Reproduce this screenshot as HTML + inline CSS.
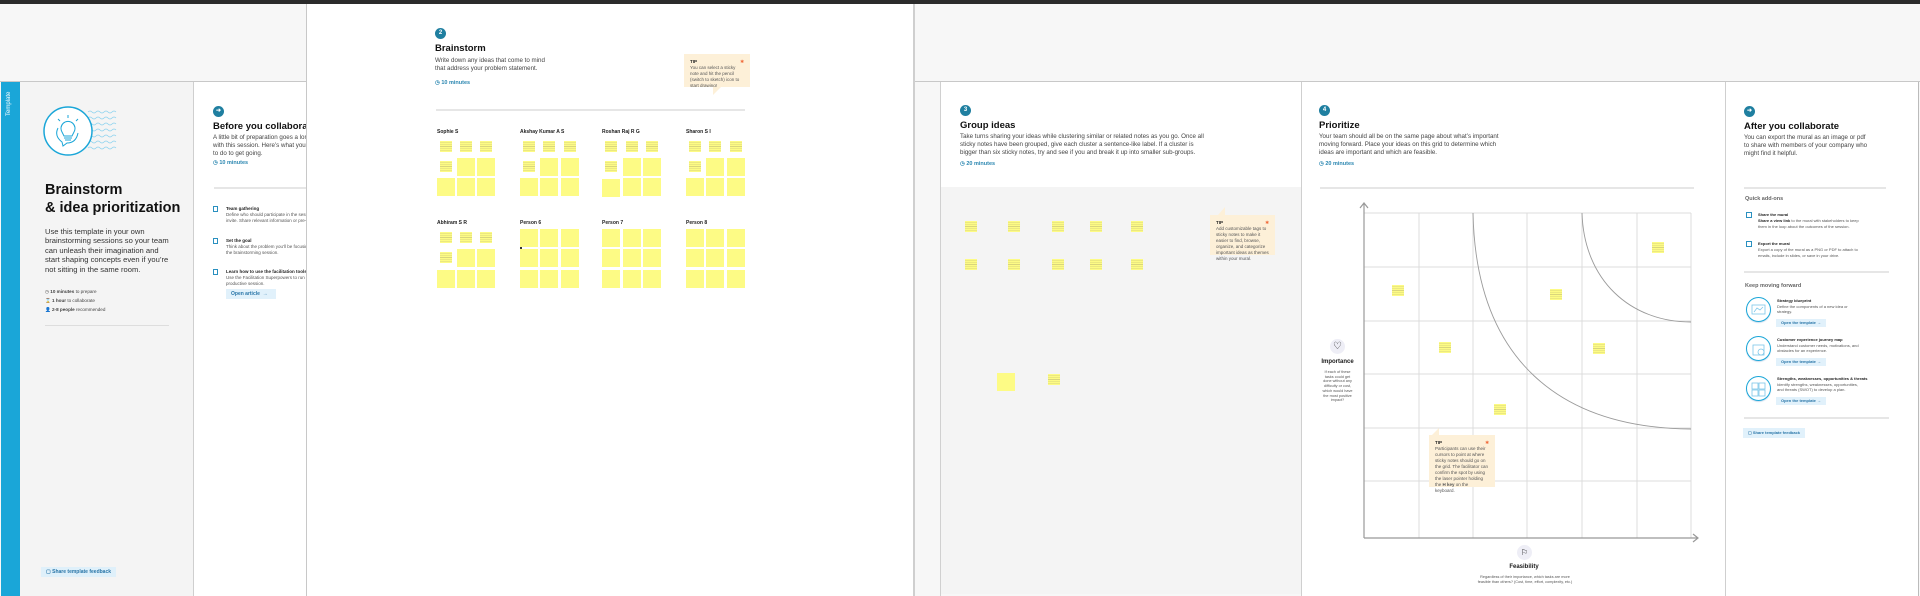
<!DOCTYPE html>
<html><head><meta charset="utf-8"><style>
*{margin:0;padding:0;box-sizing:border-box}
body{width:1920px;height:596px;background:#f7f7f7;position:relative;overflow:hidden;font-family:"Liberation Sans",sans-serif;color:#1a1a1a}
.a{position:absolute}
.s{position:absolute;background:#fdfb85;width:18px;height:18px}
.t{background:#fdfb85 repeating-linear-gradient(#fdfb85 0 1.6px,#d9d57c 1.6px 2.2px);background-clip:content-box;padding:3px 3px 4px}
.circ{position:absolute;width:11px;height:11px;border-radius:50%;background:#1f7fa0;color:#fff;font-size:6px;font-weight:bold;text-align:center;line-height:11px}
.h{position:absolute;font-weight:bold;font-size:9.5px;color:#111}
.p{position:absolute;font-size:6.2px;line-height:8px;color:#444}
.min{position:absolute;font-size:5.5px;color:#2a86b0;font-weight:bold}
.line{position:absolute;height:2px;background:#e6e6e6}
.nm{position:absolute;font-size:5px;font-weight:bold;color:#222}
.tip{position:absolute;background:#fdf0d8;font-size:4.5px;line-height:6px;color:#555;padding:5px 6px}
.btn{position:absolute;background:#e1f1fb;color:#2a76a8;font-size:5px;font-weight:bold;padding:0 5px;line-height:10px}
</style></head><body>
<div class="a" style="left:0;top:0;width:1920px;height:4px;background:#2b2b2b"></div>
<div class="a" style="left:0;top:81px;width:1920px;height:1px;background:#c8c8c8"></div>

<div class="a" style="left:1px;top:82px;width:19px;height:514px;background:#1aa6d8"></div>
<div class="a" style="color:#fff;font-size:6px;transform:rotate(-90deg);transform-origin:left top;top:116px;left:6px">Template</div>
<div class="a" style="left:20px;top:82px;width:174px;height:514px;background:#f4f4f4;border-right:1px solid #cfcfcf"></div>
<svg class="a" style="left:40px;top:104px" width="80" height="56" viewBox="0 0 80 56">
<g fill="none" stroke="#8dd3ef" stroke-width="0.8">
<path d="M48 8 q2-2 4 0 t4 0 t4 0 t4 0 t4 0 t4 0 t4 0"/><path d="M48 14 q2-2 4 0 t4 0 t4 0 t4 0 t4 0 t4 0 t4 0"/><path d="M48 20 q2-2 4 0 t4 0 t4 0 t4 0 t4 0 t4 0 t4 0"/><path d="M48 26 q2-2 4 0 t4 0 t4 0 t4 0 t4 0 t4 0 t4 0"/><path d="M48 32 q2-2 4 0 t4 0 t4 0 t4 0 t4 0 t4 0 t4 0"/><path d="M48 38 q2-2 4 0 t4 0 t4 0 t4 0 t4 0 t4 0 t4 0"/><path d="M48 44 q2-2 4 0 t4 0 t4 0 t4 0 t4 0 t4 0 t4 0"/></g>
<circle cx="28" cy="27" r="24" fill="#fff" stroke="#1aa6d8" stroke-width="1.5"/>
<g fill="none" stroke="#1aa6d8" stroke-width="1"><path d="M22 28 a7 7 0 1 1 12 0 l-2 4 h-8 z"/><path d="M24 34 h8 M25 36 h6"/><path d="M18 24 q-4 8 4 14 l1 4 l4-3 q9 0 11-10"/><path d="M28 14 v-3 M20 17 l-2-2 M36 17 l2-2"/></g></svg>
<div class="a" style="left:45px;top:181px;font-size:14.5px;font-weight:bold;line-height:18px;color:#111">Brainstorm<br>&amp; idea prioritization</div>
<div class="a" style="left:45px;top:227px;font-size:7.6px;line-height:9.4px;color:#333;width:125px">Use this template in your own brainstorming sessions so your team can unleash their imagination and start shaping concepts even if you’re not sitting in the same room.</div>
<div class="a" style="left:45px;top:287px;font-size:4.6px;line-height:9px;color:#444">◷ <b>10 minutes</b> to prepare<br>⌛ <b>1 hour</b> to collaborate<br>👤 <b>2-8 people</b> recommended</div>
<div class="a" style="left:45px;top:325px;width:124px;height:1px;background:#ddd"></div>
<div class="btn" style="left:41px;top:567px;height:10px;background:#dff0fa">▢ Share template feedback</div>

<div class="a" style="left:194px;top:82px;width:113px;height:514px;background:#fff"></div>
<div class="circ" style="left:213px;top:106px">➜</div>
<div class="h" style="left:213px;top:121px">Before you collaborate</div>
<div class="p" style="left:213px;top:134px;white-space:nowrap">A little bit of preparation goes a long way<br>with this session. Here’s what you need<br>to do to get going.</div>
<div class="min" style="left:213px;top:160px">◷ 10 minutes</div>
<div class="line" style="left:214px;top:187px;width:93px"></div>
<div class="a" style="left:213px;top:206px;width:5px;height:6px;border:1px solid #2a90c0"></div>
<div class="a" style="left:226px;top:206px;font-size:4.5px;line-height:6px;color:#555;white-space:nowrap"><b style="color:#222">Team gathering</b><br>Define who should participate in the session and<br>invite. Share relevant information or pre-work.</div>
<div class="a" style="left:213px;top:238px;width:5px;height:6px;border:1px solid #2a90c0"></div>
<div class="a" style="left:226px;top:238px;font-size:4.5px;line-height:6px;color:#555;white-space:nowrap"><b style="color:#222">Set the goal</b><br>Think about the problem you’ll be focusing on in<br>the brainstorming session.</div>
<div class="a" style="left:213px;top:269px;width:5px;height:6px;border:1px solid #2a90c0"></div>
<div class="a" style="left:226px;top:269px;font-size:4.5px;line-height:6px;color:#555;white-space:nowrap"><b style="color:#222">Learn how to use the facilitation tools</b><br>Use the Facilitation Superpowers to run a<br>productive session.</div>
<div class="btn" style="left:226px;top:289px;width:50px;height:10px">Open article &nbsp;→</div>

<div class="a" style="left:306px;top:4px;width:609px;height:592px;background:#fff;border-left:1px solid #c8c8c8;border-right:2px solid #cfcfcf"></div>
<div class="circ" style="left:435px;top:28px">2</div>
<div class="h" style="left:435px;top:43px">Brainstorm</div>
<div class="p" style="left:435px;top:57px">Write down any ideas that come to mind<br>that address your problem statement.</div>
<div class="min" style="left:435px;top:80px">◷ 10 minutes</div>
<div class="tip" style="left:684px;top:54px;width:66px;height:33px"><b style="color:#222">TIP</b><span style="float:right;color:#f06a3a">✱</span><br>You can select a sticky note and hit the pencil (switch to sketch) icon to start drawing!</div>
<div class="a" style="left:713px;top:87px;width:0;height:0;border-left:8px solid #fdf0d8;border-bottom:8px solid transparent"></div>
<div class="line" style="left:436px;top:109px;width:309px"></div>
<div class="nm" style="left:437px;top:129px">Sophie S</div>
<div class="nm" style="left:520px;top:129px">Akshay Kumar A S</div>
<div class="nm" style="left:602px;top:129px">Roshan Raj R G</div>
<div class="nm" style="left:686px;top:129px">Sharon S I</div>
<div class="nm" style="left:437px;top:220px">Abhiram S R</div>
<div class="nm" style="left:520px;top:220px">Person 6</div>
<div class="nm" style="left:602px;top:220px">Person 7</div>
<div class="nm" style="left:686px;top:220px">Person 8</div>
<div class="s t" style="left:437px;top:138px"></div><div class="s t" style="left:457px;top:138px"></div><div class="s t" style="left:477px;top:138px"></div>
<div class="s t" style="left:437px;top:158px"></div><div class="s" style="left:457px;top:158px"></div><div class="s" style="left:477px;top:158px"></div>
<div class="s" style="left:437px;top:178px"></div><div class="s" style="left:457px;top:178px"></div><div class="s" style="left:477px;top:178px"></div>
<div class="s t" style="left:520px;top:138px"></div><div class="s t" style="left:540px;top:138px"></div><div class="s t" style="left:561px;top:138px"></div>
<div class="s t" style="left:520px;top:158px"></div><div class="s" style="left:540px;top:158px"></div><div class="s" style="left:561px;top:158px"></div>
<div class="s" style="left:520px;top:178px"></div><div class="s" style="left:540px;top:178px"></div><div class="s" style="left:561px;top:178px"></div>
<div class="s t" style="left:602px;top:138px"></div><div class="s t" style="left:623px;top:138px"></div><div class="s t" style="left:643px;top:138px"></div>
<div class="s t" style="left:602px;top:158px"></div><div class="s" style="left:623px;top:158px"></div><div class="s" style="left:643px;top:158px"></div>
<div class="s" style="left:602px;top:179px"></div><div class="s" style="left:623px;top:178px"></div><div class="s" style="left:643px;top:178px"></div>
<div class="s t" style="left:686px;top:138px"></div><div class="s t" style="left:706px;top:138px"></div><div class="s t" style="left:727px;top:138px"></div>
<div class="s t" style="left:686px;top:158px"></div><div class="s" style="left:706px;top:158px"></div><div class="s" style="left:727px;top:158px"></div>
<div class="s" style="left:686px;top:178px"></div><div class="s" style="left:706px;top:178px"></div><div class="s" style="left:727px;top:178px"></div>
<div class="s t" style="left:437px;top:229px"></div><div class="s t" style="left:457px;top:229px"></div><div class="s t" style="left:477px;top:229px"></div>
<div class="s t" style="left:437px;top:249px"></div><div class="s" style="left:457px;top:249px"></div><div class="s" style="left:477px;top:249px"></div>
<div class="s" style="left:437px;top:270px"></div><div class="s" style="left:457px;top:270px"></div><div class="s" style="left:477px;top:270px"></div>
<div class="s" style="left:520px;top:229px"></div><div class="s" style="left:540px;top:229px"></div><div class="s" style="left:561px;top:229px"></div>
<div class="s" style="left:520px;top:249px"></div><div class="s" style="left:540px;top:249px"></div><div class="s" style="left:561px;top:249px"></div>
<div class="s" style="left:520px;top:270px"></div><div class="s" style="left:540px;top:270px"></div><div class="s" style="left:561px;top:270px"></div>
<div class="s" style="left:602px;top:229px"></div><div class="s" style="left:623px;top:229px"></div><div class="s" style="left:643px;top:229px"></div>
<div class="s" style="left:602px;top:249px"></div><div class="s" style="left:623px;top:249px"></div><div class="s" style="left:643px;top:249px"></div>
<div class="s" style="left:602px;top:270px"></div><div class="s" style="left:623px;top:270px"></div><div class="s" style="left:643px;top:270px"></div>
<div class="s" style="left:686px;top:229px"></div><div class="s" style="left:706px;top:229px"></div><div class="s" style="left:727px;top:229px"></div>
<div class="s" style="left:686px;top:249px"></div><div class="s" style="left:706px;top:249px"></div><div class="s" style="left:727px;top:249px"></div>
<div class="s" style="left:686px;top:270px"></div><div class="s" style="left:706px;top:270px"></div><div class="s" style="left:727px;top:270px"></div>
<div class="a" style="left:520px;top:247px;width:2px;height:2px;background:#333"></div>

<div class="a" style="left:940px;top:82px;width:1px;height:514px;background:#d0d0d0"></div>

<div class="a" style="left:941px;top:82px;width:360px;height:105px;background:#fff"></div>
<div class="a" style="left:941px;top:187px;width:360px;height:407px;background:#f4f4f4"></div>
<div class="circ" style="left:960px;top:105px">3</div>
<div class="h" style="left:960px;top:120px">Group ideas</div>
<div class="p" style="left:960px;top:133px;white-space:nowrap">Take turns sharing your ideas while clustering similar or related notes as you go. Once all<br>sticky notes have been grouped, give each cluster a sentence-like label. If a cluster is<br>bigger than six sticky notes, try and see if you and break it up into smaller sub-groups.</div>
<div class="min" style="left:960px;top:161px">◷ 20 minutes</div>
<div class="s t" style="left:962px;top:218px"></div><div class="s t" style="left:1005px;top:218px"></div><div class="s t" style="left:1049px;top:218px"></div><div class="s t" style="left:1087px;top:218px"></div><div class="s t" style="left:1128px;top:218px"></div>
<div class="s t" style="left:962px;top:256px"></div><div class="s t" style="left:1005px;top:256px"></div><div class="s t" style="left:1049px;top:256px"></div><div class="s t" style="left:1087px;top:256px"></div><div class="s t" style="left:1128px;top:256px"></div>
<div class="s" style="left:997px;top:373px"></div><div class="s t" style="left:1045px;top:371px"></div>
<div class="tip" style="left:1210px;top:215px;width:65px;height:40px"><b style="color:#222">TIP</b><span style="float:right;color:#f06a3a">✱</span><br>Add customizable tags to sticky notes to make it easier to find, browse, organize, and categorize important ideas as themes within your mural.</div>
<div class="a" style="left:1218px;top:207px;width:0;height:0;border-left:7px solid transparent;border-bottom:8px solid #fdf0d8"></div>

<div class="a" style="left:1301px;top:82px;width:425px;height:514px;background:#fff;border-left:1px solid #cfcfcf;border-right:1px solid #cfcfcf"></div>
<div class="circ" style="left:1319px;top:105px">4</div>
<div class="h" style="left:1319px;top:120px">Prioritize</div>
<div class="p" style="left:1319px;top:133px;white-space:nowrap">Your team should all be on the same page about what’s important<br>moving forward. Place your ideas on this grid to determine which<br>ideas are important and which are feasible.</div>
<div class="min" style="left:1319px;top:161px">◷ 20 minutes</div>
<div class="line" style="left:1320px;top:187px;width:374px"></div>
<svg class="a" style="left:1355px;top:198px" width="350" height="350" viewBox="1355 198 350 350">
<g stroke="#dcdcdc" stroke-width="1" fill="none">
<path d="M1364 213H1691M1364 267H1691M1364 321H1691M1364 374H1691M1364 428H1691M1364 481H1691"/>
<path d="M1419 213V538M1473 213V538M1527 213V538M1582 213V538M1637 213V538M1691 213V538"/></g>
<g stroke="#9a9a9a" stroke-width="0.9" fill="none">
<path d="M1473 213 C1476 360 1560 428 1691 429"/>
<path d="M1582 213 C1584 280 1630 322 1691 322"/></g>
<g stroke="#999" stroke-width="1.2" fill="none">
<path d="M1364 538V203M1360 208l4-5 4 5"/>
<path d="M1364 538H1698M1693 534l5 4-5 4"/></g></svg>
<div class="s t" style="left:1649px;top:239px"></div><div class="s t" style="left:1389px;top:282px"></div><div class="s t" style="left:1547px;top:286px"></div>
<div class="s t" style="left:1436px;top:339px"></div><div class="s t" style="left:1590px;top:340px"></div><div class="s t" style="left:1491px;top:401px"></div>
<div class="tip" style="left:1429px;top:435px;width:66px;height:52px"><b style="color:#222">TIP</b><span style="float:right;color:#f06a3a">✱</span><br>Participants can use their cursors to point at where sticky notes should go on the grid. The facilitator can confirm the spot by using the laser pointer holding the <b>H key</b> on the keyboard.</div>
<div class="a" style="left:1432px;top:428px;width:0;height:0;border-left:7px solid transparent;border-bottom:7px solid #fdf0d8"></div>
<div class="a" style="left:1330px;top:339px;width:15px;height:15px;border-radius:50%;background:#eeeef6;text-align:center;font-size:10px;line-height:15px">♡</div>
<div class="a" style="left:1320px;top:359px;width:35px;text-align:center;font-size:6px;font-weight:bold">Importance</div>
<div class="a" style="left:1321px;top:370px;width:33px;text-align:center;font-size:3.8px;line-height:4.7px;color:#555">If each of these tasks could get done without any difficulty or cost, which would have the most positive impact?</div>
<div class="a" style="left:1517px;top:545px;width:15px;height:15px;border-radius:50%;background:#eeeef6;text-align:center;font-size:8px;line-height:15px">⚐</div>
<div class="a" style="left:1504px;top:564px;width:40px;text-align:center;font-size:6px;font-weight:bold">Feasibility</div>
<div class="a" style="left:1475px;top:575px;width:100px;text-align:center;font-size:3.8px;line-height:4.8px;color:#555">Regardless of their importance, which tasks are more feasible than others? (Cost, time, effort, complexity, etc.)</div>

<div class="a" style="left:1726px;top:82px;width:193px;height:514px;background:#fff;border-right:1px solid #bbb"></div>
<div class="circ" style="left:1744px;top:106px">➜</div>
<div class="h" style="left:1744px;top:121px">After you collaborate</div>
<div class="p" style="left:1744px;top:134px;white-space:nowrap">You can export the mural as an image or pdf<br>to share with members of your company who<br>might find it helpful.</div>
<div class="line" style="left:1744px;top:187px;width:142px"></div>
<div class="a" style="left:1745px;top:196px;font-size:5.5px;color:#666;font-weight:bold">Quick add-ons</div>
<div class="a" style="left:1746px;top:212px;width:6px;height:6px;border:1px solid #2a90c0"></div>
<div class="a" style="left:1758px;top:212px;font-size:4px;line-height:6px;color:#555;white-space:nowrap"><b style="color:#222">Share the mural</b><br><b style="color:#222">Share a view link</b> to the mural with stakeholders to keep<br>them in the loop about the outcomes of the session.</div>
<div class="a" style="left:1746px;top:241px;width:6px;height:6px;border:1px solid #2a90c0"></div>
<div class="a" style="left:1758px;top:241px;font-size:4px;line-height:6px;color:#555;white-space:nowrap"><b style="color:#222">Export the mural</b><br>Export a copy of the mural as a PNG or PDF to attach to<br>emails, include in slides, or save in your drive.</div>
<div class="line" style="left:1744px;top:271px;width:145px"></div>
<div class="a" style="left:1745px;top:283px;font-size:5.5px;color:#666;font-weight:bold">Keep moving forward</div>
<div class="a" style="left:1746px;top:297px;width:25px;height:25px;border-radius:50%;border:1.3px solid #1aa6d8;background:#fff;box-shadow:0 1px 1px #cde"></div>
<div class="a" style="left:1746px;top:336px;width:25px;height:25px;border-radius:50%;border:1.3px solid #1aa6d8;background:#fff;box-shadow:0 1px 1px #cde"></div>
<div class="a" style="left:1746px;top:376px;width:25px;height:25px;border-radius:50%;border:1.3px solid #1aa6d8;background:#fff;box-shadow:0 1px 1px #cde"></div>
<svg class="a" style="left:1746px;top:297px" width="25" height="110"><g fill="none" stroke="#7cc6e8" stroke-width="0.8"><rect x="6" y="8" width="13" height="9"/><path d="M8 15l3-4 3 2 3-3"/><rect x="7" y="48" width="11" height="10"/><circle cx="15" cy="55" r="3"/><rect x="6" y="86" width="6" height="6"/><rect x="13" y="86" width="6" height="6"/><rect x="6" y="93" width="6" height="6"/><rect x="13" y="93" width="6" height="6"/></g></svg>
<div class="a" style="left:1777px;top:298px;font-size:4px;line-height:5.5px;color:#555;white-space:nowrap"><b style="color:#222">Strategy blueprint</b><br>Define the components of a new idea or<br>strategy.</div>
<div class="btn" style="left:1776px;top:319px;font-size:4px;line-height:8px">Open the template →</div>
<div class="a" style="left:1777px;top:337px;font-size:4px;line-height:5.5px;color:#555;white-space:nowrap"><b style="color:#222">Customer experience journey map</b><br>Understand customer needs, motivations, and<br>obstacles for an experience.</div>
<div class="btn" style="left:1776px;top:358px;font-size:4px;line-height:8px">Open the template →</div>
<div class="a" style="left:1777px;top:376px;font-size:4px;line-height:5.5px;color:#555;white-space:nowrap"><b style="color:#222">Strengths, weaknesses, opportunities &amp; threats</b><br>Identify strengths, weaknesses, opportunities,<br>and threats (SWOT) to develop a plan.</div>
<div class="btn" style="left:1776px;top:397px;font-size:4px;line-height:8px">Open the template →</div>
<div class="line" style="left:1744px;top:417px;width:145px"></div>
<div class="btn" style="left:1743px;top:428px;font-size:4px;line-height:10px">▢ Share template feedback</div>
</body></html>
